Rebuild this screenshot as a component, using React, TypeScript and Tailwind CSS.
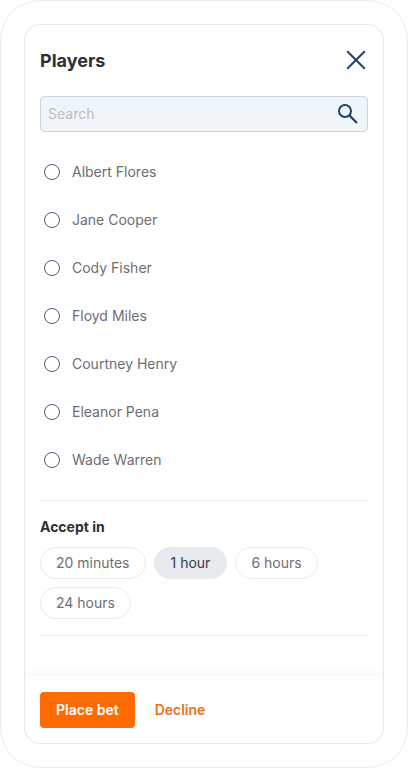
import { useState } from 'react';

const PLAYERS = [
  'Albert Flores',
  'Jane Cooper',
  'Cody Fisher',
  'Floyd Miles',
  'Courtney Henry',
  'Eleanor Pena',
  'Wade Warren',
];

const DURATIONS = ['20 minutes', '1 hour', '6 hours', '24 hours'];

export default function App() {
  const [query, setQuery] = useState('');
  const [player, setPlayer] = useState('');
  const [duration, setDuration] = useState('1 hour');

  const visible = PLAYERS.filter(p => p.toLowerCase().includes(query.toLowerCase()));

  return (
    <div className="h-screen bg-white font-['Inter',sans-serif]">
      <div className="h-full rounded-[40px] border border-[#e9eaea] p-[23px]">
        <div className="flex h-full flex-col overflow-hidden rounded-2xl border border-[#e6e7e8]">
          <div className="flex-1 px-[15px]">
            <header className="flex h-[71px] items-center justify-between pr-0.5">
              <h2 className="text-lg font-bold text-[#2f3032]">Players</h2>
              <button aria-label="Close" className="mb-0.5 cursor-pointer">
                <CloseIcon />
              </button>
            </header>

            <div className="flex h-9 items-center justify-between rounded-[4px] border border-[#ccd6e0] bg-[#f0f5f9] pr-[9px] pl-[7px]">
              <input
                value={query}
                onChange={e => setQuery(e.target.value)}
                placeholder="Search"
                className="min-w-0 flex-1 text-sm text-[#2f3032] outline-none placeholder:text-[#b9bdc5]"
              />
              <SearchIcon />
            </div>

            {/* Players list */}
            <ul className="mt-4 h-[353px] border-b border-[#e8e9e9]">
              {visible.map(name => (
                <li key={name}>
                  <button onClick={() => setPlayer(name)} className="flex h-12 w-full cursor-pointer items-center gap-3 pl-1">
                    <Radio checked={player === name} />
                    <span className="text-sm text-[#6d6e71]">{name}</span>
                  </button>
                </li>
              ))}
            </ul>

            {/* Accept in */}
            <section className="border-b border-[#e8e9e9] pt-4 pb-4">
              <h3 className="text-sm leading-5 font-bold text-[#2f3032]">Accept in</h3>
              <div className="mt-2.5 flex flex-wrap gap-2">
                {DURATIONS.map(d => (
                  <Chip key={d} label={d} active={d === duration} onClick={() => setDuration(d)} />
                ))}
              </div>
            </section>
          </div>

          <footer className="flex h-[67px] items-start gap-5 px-[15px] pt-4 shadow-[0_-1px_12px_rgba(0,0,0,0.05)]">
            <button className="h-9 cursor-pointer rounded-[4px] bg-[#ff6b00] px-4 text-sm font-semibold text-white">
              Place bet
            </button>
            <button className="h-9 cursor-pointer text-sm font-semibold text-[#e9711c]">Decline</button>
          </footer>
        </div>
      </div>
    </div>
  );
}

function Chip({ label, active, onClick }: { label: string; active: boolean; onClick: () => void }) {
  return (
    <button
      onClick={onClick}
      className={`h-8 cursor-pointer rounded-full text-sm ${
        active ? 'bg-[#e7eaef] px-[17px] text-[#3a3b3e]' : 'border border-[#e9eaeb] px-[15px] text-[#6d6e71]'
      }`}
    >
      {label}
    </button>
  );
}

function Radio({ checked }: { checked: boolean }) {
  return (
    <span className="flex size-4 items-center justify-center rounded-full border border-[#4a607a]">
      {checked && <span className="size-2 rounded-full bg-[#233f6b]" />}
    </span>
  );
}

function CloseIcon() {
  return (
    <svg width="20" height="20" viewBox="0 0 20 20" fill="none" stroke="#233f6b" strokeWidth="2">
      <path d="M1.2 1.2l17.6 17.6M18.8 1.2L1.2 18.8" />
    </svg>
  );
}

function SearchIcon() {
  return (
    <svg width="20" height="20" viewBox="0 0 20 20" fill="none" stroke="#233f6b">
      <circle cx="7" cy="7" r="6" strokeWidth="2" />
      <path d="M11.4 11.4l7.6 7.6" strokeWidth="2.2" />
    </svg>
  );
}
